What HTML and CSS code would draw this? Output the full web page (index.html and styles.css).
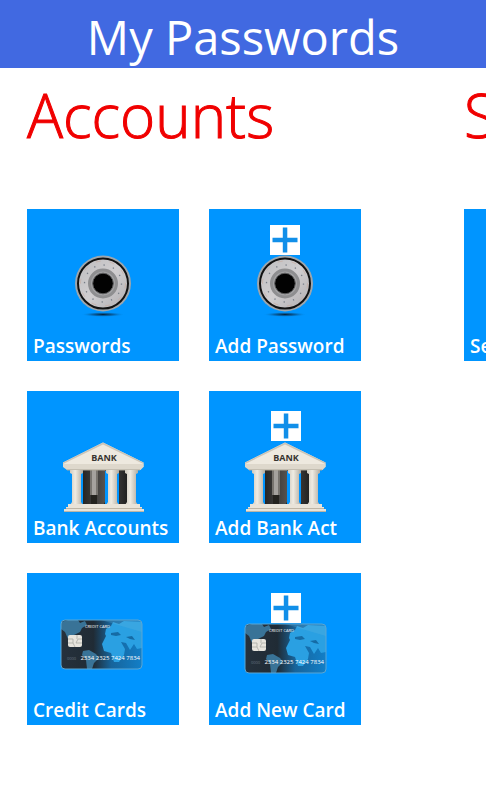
FILE: index.html
```html
<!DOCTYPE html>
<html lang="en">
<head>
<meta charset="utf-8">
<meta name="viewport" content="width=device-width, initial-scale=1">
<title>My Passwords</title>
<link rel="stylesheet" href="styles.css">
</head>
<body>
<svg class="symbols" aria-hidden="true">
  <defs>
    <linearGradient id="steel" x1="0" y1="0" x2="1" y2="1">
      <stop offset="0" stop-color="#bdbdbf"/><stop offset=".5" stop-color="#d0ced0"/><stop offset="1" stop-color="#b0aeb1"/>
    </linearGradient>
    <radialGradient id="shade">
      <stop offset="0" stop-color="#06233c"/><stop offset=".5" stop-color="#075a98" stop-opacity=".8"/><stop offset="1" stop-color="#0095ff" stop-opacity="0"/>
    </radialGradient>
    <linearGradient id="stone" x1="0" x2="1">
      <stop offset="0" stop-color="#cfc9bd"/><stop offset=".4" stop-color="#efebe2"/><stop offset="1" stop-color="#b3aca0"/>
    </linearGradient>
    <linearGradient id="inner" x1="0" x2="1">
      <stop offset="0" stop-color="#262626"/><stop offset=".5" stop-color="#55524f"/><stop offset="1" stop-color="#222"/>
    </linearGradient>
    <linearGradient id="face" x1="0" x2="1">
      <stop offset="0" stop-color="#26313c"/><stop offset=".4" stop-color="#202b35"/><stop offset=".62" stop-color="#17649b"/><stop offset="1" stop-color="#127fc8"/>
    </linearGradient>
    <clipPath id="card-edge"><rect x="34" y="47" width="81" height="49" rx="4"/></clipPath>
    <symbol id="safe" viewBox="0 0 152 152">
      <ellipse cx="76" cy="105.500" rx="22" ry="2.500" fill="url(#shade)"/>
      <circle cx="76" cy="74.500" r="28" fill="#9da6ad"/>
      <circle cx="76" cy="74.500" r="25" fill="url(#steel)" stroke="#111" stroke-width="2"/>
      <circle cx="76" cy="74.500" r="18.500" fill="none" stroke="#777e88" stroke-width="1.300" stroke-dasharray="1.3 8.387"/>
      <circle cx="76" cy="74.500" r="22.500" fill="none" stroke="#c7a89a" stroke-width=".6" stroke-dasharray="5 9"/>
      <circle cx="76" cy="74.500" r="13.500" fill="#a2a2a4" stroke="#8e8e90" stroke-width="3"/>
      <circle cx="76" cy="74.500" r="10.300" fill="#020202" stroke="#5b5b5c"/>
    </symbol>
    <symbol id="bank" viewBox="0 0 152 152">
      <path fill="#24231f" d="M52 78h50v37H52z"/>
      <path fill="#0095ff" d="M54 80h2v34h-2zM78 80h3v34h-3zM90 80h2v34h-2z"/>
      <path fill="url(#inner)" d="M56 78h8v36h-6l-2-3zM70 78h8v33l-2 3h-6zM92 78h8v36h-6l-2-3z"/>
      <path fill="#a5a29e" d="M63 78h8v26h-8z"/>
      <path fill="#77746f" d="M63 78h2v26h-2zM69 78h2v26h-2z"/>
      <path fill="#eee9df" d="M76 51.500l40.500 20V76H36V71.500z"/>
      <path fill="#cbc4b7" d="M76 51.500l40.500 20V73L76 53.500 36 73v-1.500z"/>
      <path fill="#ded8cc" d="M36 73h80.500v3l-3 3H40l-4-3z"/>
      <path fill="#aaa395" d="M40 78.500h73v1H40z"/>
      <g fill="url(#stone)">
        <path d="M43 79h13v3l-2 1v28l2 3H43l2-3V83l-2-1z"/>
        <path d="M79 79h13v3l-2 1v28l2 3H79l2-3V83l-2-1z"/>
        <path d="M98 79h13v3l-2 1v28l2 3H98l2-3V83l-2-1z"/>
      </g>
      <path fill="#e9e3d8" d="M41 113h72v3h2v2h2v3H37v-3h2v-2h2z"/>
      <path fill="#bdb5a6" d="M39 117h76v1H39zM37 120h80v1H37z"/>
      <text class="bank-text" x="77" y="70" text-anchor="middle">BANK</text>
    </symbol>
    <symbol id="card" viewBox="0 0 152 152">
      <g clip-path="url(#card-edge)">
        <path fill="url(#face)" d="M34 47h81v49H34z"/>
        <path fill="#397397" d="M34 49l7-2h10l2 3 5-2 2 4-5 3-2 4-6 3-1 5 5 3-4 1-6-5-3-7-4-3zM56 78l6-1 7 4 3 4-5 5-2 6h-5l-1-9-4-5z"/>
        <path fill="#2aa0e2" d="M78 61l1-5 5-3 2-4 6 2 5-3 18 1v26l-5 1-3-5-4 6-4-7-5-1 4 7-1 6-5 7h-5l-3-9-7-2-2-7 4-8z"/>
        <path fill="#156ba5" d="M84 60l7-1 3 3-5 1-5-1zM99 64l6-1 3 4-5-1z"/>
        <path fill="#70b9df" opacity=".22" d="M74 47h41v12z"/>
      </g>
      <rect x="34" y="47" width="81" height="49" rx="4" fill="none" stroke="#5ba6d3"/>
      <rect x="41" y="62" width="14" height="12" rx="2" fill="#e7e4dd"/>
      <path fill="none" stroke="#aaa9a5" stroke-width=".8" d="M41 66h5v4h-5M55 66h-4l-2 4h6M46 70l2 4M50 62v4"/>
      <text class="card-title" x="58" y="55">CREDIT CARD</text>
      <text class="card-small" x="40" y="87">0000</text>
      <text class="card-number" x="113" y="87" text-anchor="end">2334 2325 7424 7834</text>
    </symbol>
    <symbol id="plus" viewBox="0 0 30 30">
      <path fill="#fff" d="M0 0h30v30H0z"/>
      <path fill="#118fe9" d="M12.800 2.500h4.500v10.300h10.200v4.500H17.300v10.200h-4.500V17.300H2.500v-4.500h10.300z"/>
    </symbol>
  </defs>
</svg>
<header class="app-bar"><h1>My Passwords</h1></header>
<main class="panorama">
  <section class="panel">
    <h2>Accounts</h2>
    <div class="tiles">
      <button class="tile" type="button"><svg class="art" viewBox="0 0 152 152" aria-hidden="true"><use href="#safe"/></svg><span class="label">Passwords</span></button>
      <button class="tile" type="button"><svg class="art" viewBox="0 0 152 152" aria-hidden="true"><use href="#safe"/><use href="#plus" x="61" y="16" width="30" height="30"/></svg><span class="label">Add Password</span></button>
      <button class="tile" type="button"><svg class="art" viewBox="0 0 152 152" aria-hidden="true"><use href="#bank"/></svg><span class="label">Bank Accounts</span></button>
      <button class="tile" type="button"><svg class="art" viewBox="0 0 152 152" aria-hidden="true"><use href="#bank"/><use href="#plus" x="62" y="20" width="30" height="30"/></svg><span class="label">Add Bank Act</span></button>
      <button class="tile" type="button"><svg class="art" viewBox="0 0 152 152" aria-hidden="true"><use href="#card"/></svg><span class="label">Credit Cards</span></button>
      <button class="tile" type="button"><svg class="art" viewBox="0 0 152 152" aria-hidden="true"><use href="#card" x="2" y="4" width="152" height="152"/><use href="#plus" x="62" y="20" width="30" height="30"/></svg><span class="label">Add New Card</span></button>
    </div>
  </section>
  <section class="panel">
    <h2>Settings</h2>
    <div class="tiles">
      <button class="tile" type="button"><span class="label">Settings</span></button>
    </div>
  </section>
</main>
</body>
</html>
```
FILE: styles.css
```css
* {
  box-sizing: border-box;
}

body {
  margin: 0;
  min-height: 100vh;
  background: #fff;
  font-family: "Open Sans", "Noto Sans", sans-serif;
}

.symbols {
  position: absolute;
  width: 0;
  height: 0;
}

.app-bar {
  height: 68px;
  padding-top: 3px;
  background: #4169e1;
  color: #fff;
  text-align: center;
}

h1,
h2 {
  margin: 0;
  white-space: nowrap;
}

h1 {
  font-size: 47px;
  font-weight: 400;
  line-height: 68px;
}

.panorama {
  display: flex;
  gap: 103px;
  padding: 8px 27px 24px;
  overflow-x: auto;
  scrollbar-width: none;
}

.panel {
  flex: none;
}

h2 {
  height: 133px;
  color: #f00000;
  font-size: 60px;
  font-weight: 300;
  line-height: 78px;
  -webkit-text-stroke: 1px #f00000;
}

.tiles {
  display: grid;
  grid-template-columns: repeat(2, 152px);
  gap: 30px;
}

.tile {
  display: grid;
  aspect-ratio: 1;
  padding: 0;
  border: 0;
  background: #0095ff;
  color: #fff;
  font: inherit;
  cursor: pointer;
}

.art,
.label {
  grid-area: 1 / 1;
}

.art {
  width: 100%;
  height: 100%;
}

.label {
  align-self: end;
  justify-self: start;
  padding: 0 0 3px 6px;
  font-size: 19px;
  font-weight: 600;
  line-height: 24px;
  white-space: nowrap;
}

.bank-text {
  fill: #38342f;
  font-size: 9px;
  font-weight: 700;
}

.card-title,
.card-number,
.card-small {
  fill: #fff;
  font-family: "Open Sans", sans-serif;
  font-weight: 400;
}

.card-title {
  font-size: 4px;
}

.card-number {
  font-size: 6px;
}

.card-small {
  fill: #667480;
  font-size: 4px;
}
```
